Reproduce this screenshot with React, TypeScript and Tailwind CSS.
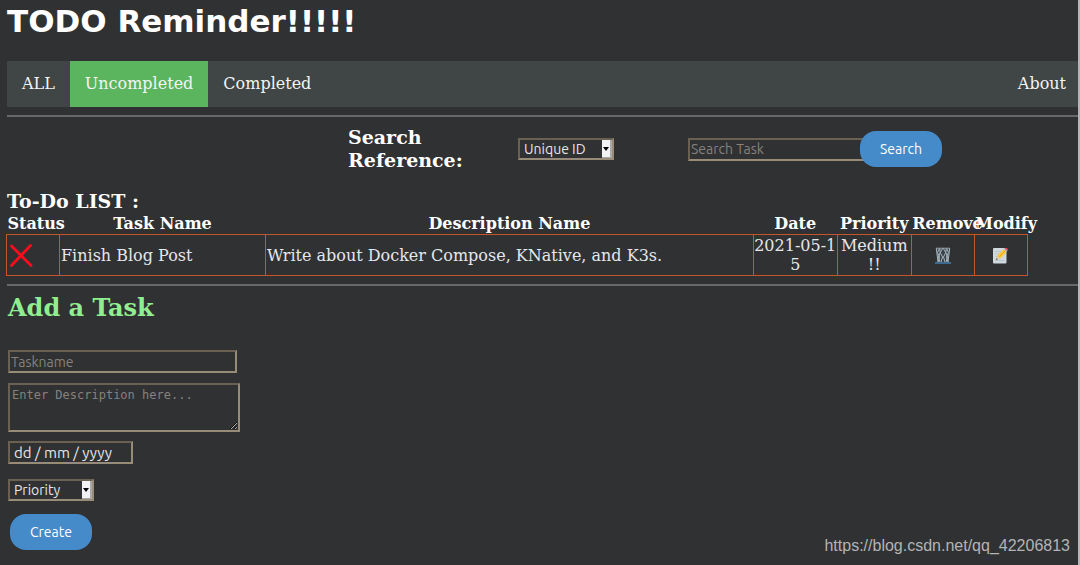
import type { SelectHTMLAttributes } from "react";

type Task = {
  id: number;
  name: string;
  description: string;
  date: string;
  priority: string;
};

const tasks: Task[] = [
  {
    id: 1,
    name: "Finish Blog Post",
    description: "Write about Docker Compose, KNative, and K3s.",
    date: "2021-05-15",
    priority: "Medium !!",
  },
];

const inset =
  "border-2 border-t-[#6b6153] border-l-[#6b6153] border-r-[#988b78] border-b-[#988b78] bg-transparent";
const control = `${inset} font-[Ubuntu,'Noto_Sans',sans-serif] text-gray-200`;
const cell = "border border-[#c4562a]";

function Select({ className, ...props }: SelectHTMLAttributes<HTMLSelectElement>) {
  return (
    <div className={`relative ${className}`}>
      <select
        {...props}
        className={`${control} block h-[22px] w-full appearance-none pl-1 text-sm leading-4`}
      />
      <span className="pointer-events-none absolute top-0.5 right-0.5 bottom-0.5 flex w-2.5 items-center justify-center border-r-2 border-b border-[#aaa] bg-[#f2f2f4]">
        <svg viewBox="0 0 6 4" className="h-1 w-1.5" aria-hidden="true">
          <path d="M0 0h6L3 4z" fill="#000" />
        </svg>
      </span>
    </div>
  );
}

function CrossIcon() {
  return (
    <svg viewBox="0 0 24 24" className="ml-px size-6" role="img" aria-label="Not done">
      <path
        d="M2.500 3 22 22.500M21.500 2.500 2.500 22.500"
        fill="none"
        stroke="#fb0d1b"
        strokeWidth="2.800"
        strokeLinecap="round"
      />
    </svg>
  );
}

function BinIcon() {
  return (
    <svg viewBox="0 0 16 17" className="mx-auto h-[17px] w-4" aria-hidden="true">
      <path d="M1 1h14l-1.300 14H2.300z" fill="#39424a" />
      <path
        d="M1.300 1 3 15M4.600 1l.6 4.500L3.500 10 5 15M4.600 1 2.500 5.500 4.500 10 3 15M8 1 5.200 5.500 7.500 10 6 15M8 1l2.800 4.500L8.500 10l1.500 5M11.400 1l-.6 4.500 1.700 4.500-1.500 5M11.400 1l2.100 4.500-2 4.500 1.500 5M14.700 1 13 15"
        fill="none"
        stroke="#a9b5bc"
        strokeWidth="1"
      />
      <path d="M1 1.200h14" stroke="#8e9ba2" strokeWidth="1" />
      <path d="M0 16h16" stroke="#4784b8" strokeWidth="1.400" />
    </svg>
  );
}

function MemoIcon() {
  return (
    <svg viewBox="0 0 17 17" className="mx-auto size-[17px]" aria-hidden="true">
      <rect x="1" y="1" width="13.500" height="15.500" rx="1" fill="#cfd8dd" />
      <path d="M3 4.500h6M3 7h5M3 9.500h3M3 13.500h9" stroke="#b4c0c8" strokeWidth=".8" />
      <path d="M4 13 5.200 8.800 8.200 11.600z" fill="#e8c9a0" />
      <path d="M4 13l.6-1.900 1.300 1.200z" fill="#4a4a4a" />
      <path d="M5.200 8.800 11.500 2.200l3 2.800-6.300 6.600z" fill="#fbc93a" />
      <path d="M6.800 10.300 13.200 3.800" stroke="#f0a01c" strokeWidth=".8" />
      <path d="M11.500 2.200l.9-.9 3 2.800-.9.900z" fill="#b0bec5" />
      <path d="M12.400 1.300c1.700-1.900 5 1 3 2.800z" fill="#ef4460" />
    </svg>
  );
}

export default function App() {
  return (
    <div className="relative min-h-screen border-r-2 border-[#b5b5b5] bg-[#303133] pl-[7px] font-['DejaVu_Serif',serif] text-base text-white">
      <h1 className="pt-0.5 font-['DejaVu_Sans',sans-serif] text-[31px] leading-[38px] font-bold">
        TODO Reminder!!!!!
      </h1>

      <nav className="mt-[21px] flex bg-[#404545] leading-[18px] text-gray-100">
        <a href="#all" className="px-[15px] py-3.5">
          ALL
        </a>
        <a href="#uncompleted" className="bg-[#5ab55e] px-[15px] py-3.5">
          Uncompleted
        </a>
        <a href="#completed" className="px-[15px] py-3.5">
          Completed
        </a>
        <a href="#about" className="ml-auto px-3 py-3.5">
          About
        </a>
      </nav>

      <hr className="mt-2 border-t-2 border-[#67686a]" />

      <form
        className="mt-[9px] grid grid-cols-[34fr_17fr_17fr_39fr] items-center pl-px"
        onSubmit={(e) => e.preventDefault()}
      >
        <label
          htmlFor="search"
          className="col-start-2 w-30 text-[19px] leading-[23px] font-bold"
        >
          Search Reference:
        </label>
        <Select aria-label="Search by" className="w-24">
          <option>Unique ID</option>
          <option>Task Name</option>
        </Select>
        <div className="flex items-center">
          <input
            id="search"
            placeholder="Search Task"
            className={`${control} h-[23px] w-44 px-px text-sm placeholder:text-[#85827e]`}
          />
          <button
            type="submit"
            className="-ml-1 h-9 rounded-2xl bg-[#458ac9] px-5 font-[Ubuntu,'Noto_Sans',sans-serif] text-sm"
          >
            Search
          </button>
        </div>
      </form>

      <h3 className="mt-[17px] text-[19px] leading-6 font-bold">To-Do LIST :</h3>
      <table className="-ml-px w-[95.4%] table-fixed border-collapse leading-[19px]">
        <colgroup>
          <col className="w-[53px]" />
          <col className="w-[206px]" />
          <col />
          <col className="w-[84px]" />
          <col className="w-[74px]" />
          <col className="w-[63px]" />
          <col className="w-[53px]" />
        </colgroup>
        <thead>
          <tr>
            <th className="p-px">Status</th>
            <th className="p-px">Task Name</th>
            <th className="p-px">Description Name</th>
            <th className="p-px">Date</th>
            <th className="p-px">Priority</th>
            <th className="p-px">Remove</th>
            <th className="p-px">Modify</th>
          </tr>
        </thead>
        <tbody className="text-gray-200">
          {tasks.map((task) => (
            <tr key={task.id}>
              <td className={`${cell} p-px`}>
                <CrossIcon />
              </td>
              <td className={`${cell} p-px`}>{task.name}</td>
              <td className={`${cell} p-px`}>{task.description}</td>
              <td className={`${cell} px-0 py-px text-center break-all`}>{task.date}</td>
              <td className={`${cell} p-px text-center`}>{task.priority}</td>
              <td className={`${cell} p-px`}>
                <button type="button" aria-label="Remove" className="block w-full">
                  <BinIcon />
                </button>
              </td>
              <td className={`${cell} p-px`}>
                <button type="button" aria-label="Modify" className="block w-full">
                  <MemoIcon />
                </button>
              </td>
            </tr>
          ))}
        </tbody>
      </table>

      <hr className="mt-2 border-t-2 border-[#67686a]" />

      <h2 className="mt-2 pl-px text-2xl leading-7 font-bold text-[#90ee90]">Add a Task</h2>
      <form
        className="mt-7 flex flex-col items-start pl-px"
        onSubmit={(e) => e.preventDefault()}
      >
        <input
          aria-label="Task name"
          placeholder="Taskname"
          className={`${control} h-[23px] w-[229px] px-px text-sm placeholder:text-[#85827e]`}
        />
        <textarea
          aria-label="Description"
          placeholder="Enter Description here..."
          className={`${inset} mt-2.5 h-[49px] w-[232px] px-0.5 py-0.5 font-['DejaVu_Sans_Mono',monospace] text-xs text-gray-200 placeholder:text-[#85827e]`}
        />
        <input
          aria-label="Due date"
          placeholder="dd / mm / yyyy"
          className={`${control} mt-[9px] h-[23px] w-[125px] px-1 text-[15px] placeholder:text-gray-200`}
        />
        <Select aria-label="Priority" className="mt-[15px] w-[86px]">
          <option>Priority</option>
          <option>Low !</option>
          <option>Medium !!</option>
          <option>High !!!</option>
        </Select>
        <button
          type="submit"
          className="mt-[13px] ml-0.5 h-9 rounded-2xl bg-[#458ac9] px-5 font-[Ubuntu,'Noto_Sans',sans-serif] text-sm"
        >
          Create
        </button>
      </form>

      <p className="absolute right-2 bottom-2.5 font-['Liberation_Sans',Arial,sans-serif] text-base leading-[18px] text-[#b4b4b5]">
        https://blog.csdn.net/qq_42206813
      </p>
    </div>
  );
}
